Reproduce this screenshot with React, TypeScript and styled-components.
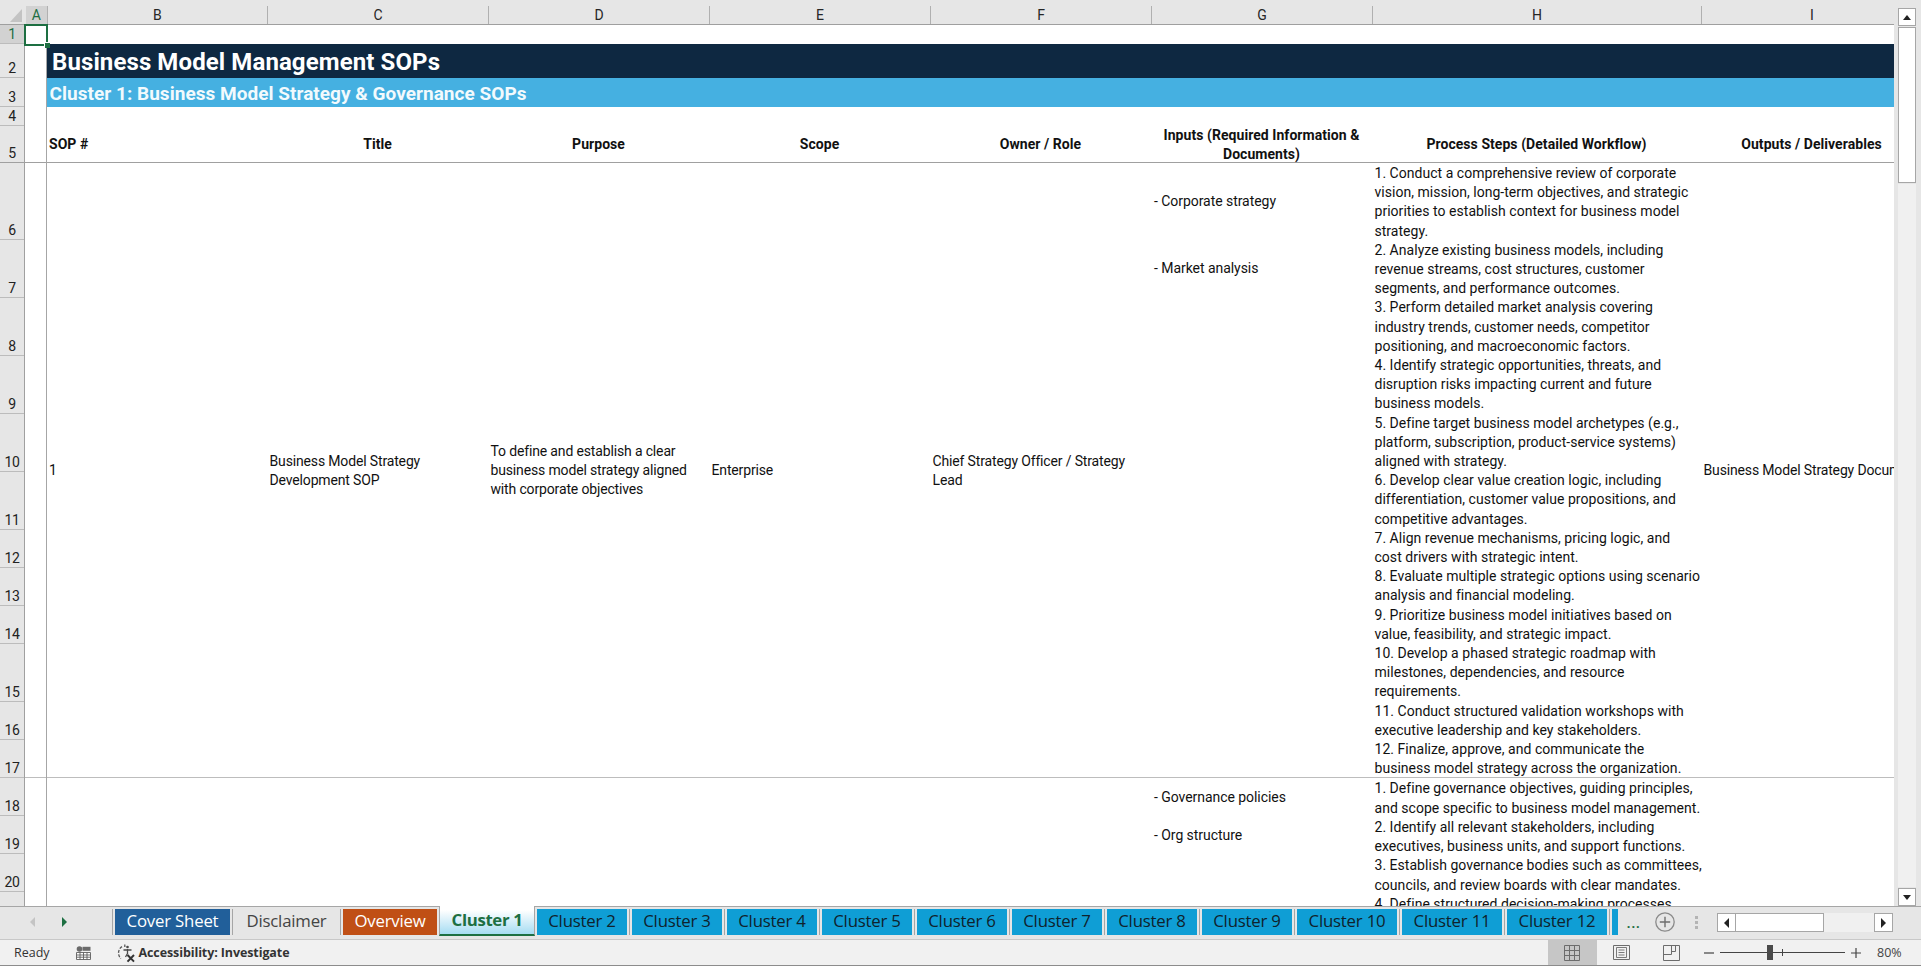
import React from 'react';
import styled, {createGlobalStyle} from 'styled-components';

const COLUMNS = [
    {name: 'A', width: 21.5},
    {name: 'B', width: 220.5},
    {name: 'C', width: 221},
    {name: 'D', width: 221},
    {name: 'E', width: 221},
    {name: 'F', width: 221},
    {name: 'G', width: 221},
    {name: 'H', width: 329},
    {name: 'I', width: 221},
];
const COL_TEMPLATE = COLUMNS.map(c => c.width + 'px').join(' ');

const ROW_HEIGHTS = [19, 34, 29, 18.7, 37.3, 77, 58, 58, 58, 58, 58, 38.5, 38, 38, 58, 38, 38, 38, 38, 38];
const toTemplate = (rows: number[]) => rows.map(h => h + 'px').join(' ');

const STEPS_ONE = `1. Conduct a comprehensive review of corporate
vision, mission, long-term objectives, and strategic
priorities to establish context for business model
strategy.
2. Analyze existing business models, including
revenue streams, cost structures, customer
segments, and performance outcomes.
3. Perform detailed market analysis covering
industry trends, customer needs, competitor
positioning, and macroeconomic factors.
4. Identify strategic opportunities, threats, and
disruption risks impacting current and future
business models.
5. Define target business model archetypes (e.g.,
platform, subscription, product-service systems)
aligned with strategy.
6. Develop clear value creation logic, including
differentiation, customer value propositions, and
competitive advantages.
7. Align revenue mechanisms, pricing logic, and
cost drivers with strategic intent.
8. Evaluate multiple strategic options using scenario
analysis and financial modeling.
9. Prioritize business model initiatives based on
value, feasibility, and strategic impact.
10. Develop a phased strategic roadmap with
milestones, dependencies, and resource
requirements.
11. Conduct structured validation workshops with
executive leadership and key stakeholders.
12. Finalize, approve, and communicate the
business model strategy across the organization.`;

const STEPS_TWO = `1. Define governance objectives, guiding principles,
and scope specific to business model management.
2. Identify all relevant stakeholders, including
executives, business units, and support functions.
3. Establish governance bodies such as committees,
councils, and review boards with clear mandates.
4. Define structured decision-making processes.`;

const TABS: {label: string; width: number; kind: 'navy' | 'plain' | 'rust' | 'active' | 'sky'}[] = [
    {label: 'Cover Sheet', width: 115, kind: 'navy'},
    {label: 'Disclaimer', width: 103, kind: 'plain'},
    {label: 'Overview', width: 94, kind: 'rust'},
    {label: 'Cluster 1', width: 96, kind: 'active'},
    ...[2, 3, 4, 5, 6, 7, 8, 9].map(n => ({label: 'Cluster ' + n, width: 90, kind: 'sky' as const})),
    ...[10, 11, 12].map(n => ({label: 'Cluster ' + n, width: 100, kind: 'sky' as const})),
];

export default function App() {
    return (
        <>
            <GlobalStyle />
            <Window>
                <TopGap />
                <Workbook>
                    <SheetArea>
                        <ColumnBar>
                            <Corner><CornerMark /></Corner>
                            <ColumnHeads>
                                {COLUMNS.map((col, i) => (
                                    <ColumnHead key={col.name} $selected={i === 0}>{col.name}</ColumnHead>
                                ))}
                            </ColumnHeads>
                        </ColumnBar>
                        <SheetBody>
                            <RowHeads>
                                {ROW_HEIGHTS.map((h, i) => (
                                    <RowHead key={i} $height={h} $selected={i === 0} $strong={i === 4}>{i + 1}</RowHead>
                                ))}
                            </RowHeads>
                            <Sheet>
                                <ColumnALine />
                                <BlankRow $height={19} />
                                <TitleBanner>Business Model Management SOPs</TitleBanner>
                                <ClusterBanner>Cluster 1: Business Model Strategy &amp; Governance SOPs</ClusterBanner>
                                <BlankRow $height={18.7} />
                                <HeaderRow>
                                    <HeaderCell $column={2} $left>SOP #</HeaderCell>
                                    <HeaderCell $column={3}>Title</HeaderCell>
                                    <HeaderCell $column={4}>Purpose</HeaderCell>
                                    <HeaderCell $column={5}>Scope</HeaderCell>
                                    <HeaderCell $column={6}>Owner / Role</HeaderCell>
                                    <HeaderCell $column={7}>{'Inputs (Required Information &\nDocuments)'}</HeaderCell>
                                    <HeaderCell $column={8}>Process Steps (Detailed Workflow)</HeaderCell>
                                    <HeaderCell $column={9}>Outputs / Deliverables</HeaderCell>
                                </HeaderRow>
                                <Record $rows={toTemplate(ROW_HEIGHTS.slice(5, 17))} $ruled>
                                    <MergedCell $column={2}>1</MergedCell>
                                    <MergedCell $column={3}>{'Business Model Strategy\nDevelopment SOP'}</MergedCell>
                                    <MergedCell $column={4}>{'To define and establish a clear\nbusiness model strategy aligned\nwith corporate objectives'}</MergedCell>
                                    <MergedCell $column={5}>Enterprise</MergedCell>
                                    <MergedCell $column={6}>{'Chief Strategy Officer / Strategy\nLead'}</MergedCell>
                                    <InputCell $row={1}>- Corporate strategy</InputCell>
                                    <InputCell $row={2}>- Market analysis</InputCell>
                                    <StepsCell>{STEPS_ONE}</StepsCell>
                                    <MergedCell $column={9}>Business Model Strategy Document</MergedCell>
                                </Record>
                                <Record $rows={toTemplate([38, 38, 38, 60])}>
                                    <InputCell $row={1}>- Governance policies</InputCell>
                                    <InputCell $row={2}>- Org structure</InputCell>
                                    <StepsCell>{STEPS_TWO}</StepsCell>
                                </Record>
                            </Sheet>
                        </SheetBody>
                        <SelectedCell><FillHandle /></SelectedCell>
                    </SheetArea>
                    <VerticalBar>
                        <ScrollButton><ArrowUp /></ScrollButton>
                        <VerticalThumb />
                        <VerticalTrack />
                        <ScrollButton><ArrowDown /></ScrollButton>
                    </VerticalBar>
                </Workbook>
                <TabStrip>
                    <TabNav>
                        <NavArrowLeft />
                        <NavArrowRight />
                    </TabNav>
                    {TABS.map((tab, i) => {
                        const next = TABS[i + 1];
                        return (
                            <React.Fragment key={tab.label}>
                                {i === 0 && <TabDivider />}
                                <Tab $kind={tab.kind} $width={tab.width}>{tab.label}</Tab>
                                {tab.kind !== 'active' && next?.kind !== 'active' && <TabDivider />}
                            </React.Fragment>
                        );
                    })}
                    <Tab $kind="sky" $width={5.5} />
                    <MoreTabs>...</MoreTabs>
                    <AddSheet>
                        <svg width="20" height="20" viewBox="0 0 20 20">
                            <circle cx="10" cy="10" r="9.2" fill="none" stroke="#8a8a8a" strokeWidth="1.3" />
                            <path d="M10 4.8V15.2M4.8 10H15.2" stroke="#6e6e6e" strokeWidth="1.4" />
                        </svg>
                    </AddSheet>
                    <SplitDots><i /><i /><i /></SplitDots>
                    <HorizontalBar>
                        <HorizontalButton><ArrowLeft /></HorizontalButton>
                        <HorizontalThumb />
                        <HorizontalTrack />
                        <HorizontalButton><ArrowRight /></HorizontalButton>
                    </HorizontalBar>
                </TabStrip>
                <StatusBar>
                    <ReadyLabel>Ready</ReadyLabel>
                    <StatusIcon>
                        <svg width="15" height="14" viewBox="0 0 15 14">
                            <circle cx="3.5" cy="3" r="2.8" fill="#6a6a6a" />
                            <rect x="6.5" y="0.8" width="8" height="4" fill="#6a6a6a" />
                            <path d="M0.5 6.5H14.5V13.5H0.5ZM0.5 9H14.5M0.5 11.2H14.5M4 6.5V13.5M7.5 6.5V13.5M11 6.5V13.5" fill="#fff" stroke="#5f5f5f" strokeWidth="0.9" />
                        </svg>
                    </StatusIcon>
                    <AccessibilityIcon>
                        <svg width="20" height="20" viewBox="0 0 20 20">
                            <path d="M6 3.6A7.6 7.6 0 0 0 5 15.6" fill="none" stroke="#5a5a5a" strokeWidth="1.3" strokeDasharray="3 1.4" />
                            <path d="M8.8 1.5V4" stroke="#5a5a5a" strokeWidth="1.3" />
                            <circle cx="11.5" cy="4" r="1.3" fill="#4a4a4a" />
                            <path d="M7.5 7H15.5M11.5 6V11M11.5 10.5L9.5 14" fill="none" stroke="#4a4a4a" strokeWidth="1.3" />
                            <path d="M11.5 12L18 18.6M18 12L11.5 18.6" stroke="#333" strokeWidth="2" />
                        </svg>
                    </AccessibilityIcon>
                    <AccessibilityText>Accessibility: Investigate</AccessibilityText>
                    <ViewButtons>
                        <ViewButton $active>
                            <svg width="16" height="16" viewBox="0 0 16 16">
                                <path d="M0.5 0.5H15.5V15.5H0.5ZM0.5 5.5H15.5M0.5 10.5H15.5M5.5 0.5V15.5M10.5 0.5V15.5" fill="none" stroke="#6c6c6c" />
                            </svg>
                        </ViewButton>
                        <ViewButton>
                            <svg width="17" height="15" viewBox="0 0 17 15">
                                <path d="M0.5 0.5H16.5V14.5H0.5Z" fill="none" stroke="#6c6c6c" />
                                <path d="M3.5 2.5H13.5V12.5H3.5ZM5.5 5H11.5M5.5 7.5H11.5M5.5 10H11.5" fill="none" stroke="#6c6c6c" strokeWidth="0.9" />
                            </svg>
                        </ViewButton>
                        <ViewButton>
                            <svg width="17" height="16" viewBox="0 0 17 16">
                                <path d="M0.5 0.5H16.5V15.5H0.5ZM0.5 9.5H8.5V0.5M8.5 6.5H12.5V0.5" fill="none" stroke="#6c6c6c" />
                            </svg>
                        </ViewButton>
                    </ViewButtons>
                    <ZoomControl>
                        <ZoomSign>
                            <svg width="10" height="10" viewBox="0 0 10 10"><path d="M0 5H10" stroke="#444" strokeWidth="1.2" /></svg>
                        </ZoomSign>
                        <SliderTrack>
                            <SliderTick />
                            <SliderThumb />
                        </SliderTrack>
                        <ZoomSign>
                            <svg width="10" height="10" viewBox="0 0 10 10"><path d="M0 5H10M5 0V10" stroke="#444" strokeWidth="1.2" /></svg>
                        </ZoomSign>
                        <ZoomValue>80%</ZoomValue>
                    </ZoomControl>
                </StatusBar>
            </Window>
        </>
    );
}

const GlobalStyle = createGlobalStyle`
    html, body {
        margin: 0;
        padding: 0;
        height: 100%;
        overflow: hidden;
    }
    #root {
        height: 100%;
    }
    * {
        box-sizing: border-box;
    }
`

const Window = styled.div`
    width: 100%;
    height: 966px;
    display: flex;
    flex-direction: column;
    background-color: #e6e6e6;
    font-family: Roboto, "Liberation Sans", sans-serif;
    color: #111;
    overflow: hidden;
`
const TopGap = styled.div`
    height: 6px;
    flex: none;
`
const Workbook = styled.div`
    height: 900px;
    flex: none;
    display: flex;
`
const SheetArea = styled.div`
    position: relative;
    width: 1893.5px;
    flex: none;
    display: flex;
    flex-direction: column;
`
const ColumnBar = styled.div`
    height: 19px;
    flex: none;
    display: flex;
    border-bottom: 1px solid #9f9f9f;
`
const Corner = styled.div`
    width: 26px;
    flex: none;
    position: relative;
`
const CornerMark = styled.div`
    position: absolute;
    left: 10px;
    bottom: 2px;
    width: 12px;
    height: 13px;
    background-color: #c3c3c3;
    clip-path: polygon(100% 0, 100% 100%, 0 100%);
`
const ColumnHeads = styled.div`
    flex: 1;
    display: grid;
    grid-template-columns: ${COL_TEMPLATE};
    overflow: hidden;
`
const ColumnHead = styled.div<{$selected?: boolean}>`
    display: flex;
    align-items: center;
    justify-content: center;
    font-size: 14px;
    color: ${props => props.$selected ? '#1c6e42' : '#262626'};
    background-color: ${props => props.$selected ? '#d2d2d2' : 'transparent'};
    border-right: 1px solid #b0b0b0;
`
const SheetBody = styled.div`
    flex: 1;
    min-height: 0;
    display: flex;
    overflow: hidden;
`
const RowHeads = styled.div`
    width: 25px;
    flex: none;
    display: flex;
    flex-direction: column;
    border-right: 1px solid #a0a0a0;
`
const RowHead = styled.div<{$height: number; $selected?: boolean; $strong?: boolean}>`
    height: ${props => props.$height}px;
    flex: none;
    display: flex;
    align-items: flex-end;
    justify-content: center;
    padding-bottom: 2px;
    font-size: 14px;
    line-height: 14px;
    letter-spacing: -0.3px;
    color: ${props => props.$selected ? '#1c6e42' : '#222'};
    background-color: ${props => props.$selected ? '#d2d2d2' : 'transparent'};
    border-bottom: 1px solid ${props => props.$strong ? '#a0a0a0' : '#bcbcbc'};
`
const Sheet = styled.div`
    flex: 1;
    min-width: 0;
    position: relative;
    display: flex;
    flex-direction: column;
    background-color: #fff;
    overflow: hidden;
`
const ColumnALine = styled.div`
    position: absolute;
    left: 20.5px;
    top: 0;
    bottom: 0;
    width: 1px;
    background-color: #a6a6a6;
`
const SelectedCell = styled.div`
    position: absolute;
    left: 24px;
    top: 18px;
    width: 24px;
    height: 22px;
    border: 2px solid #1d6f42;
`
const FillHandle = styled.div`
    position: absolute;
    right: -4px;
    bottom: -4px;
    width: 6px;
    height: 6px;
    background-color: #1d6f42;
    border: 1px solid #fff;
    border-width: 1px 0 0 1px;
`
const BlankRow = styled.div<{$height: number}>`
    height: ${props => props.$height}px;
    flex: none;
`
const TitleBanner = styled.div`
    height: 34px;
    flex: none;
    margin-left: 21.5px;
    padding: 2px 0 0 5.5px;
    display: flex;
    align-items: center;
    background-color: #0e2841;
    color: #fff;
    font-size: 24px;
    font-weight: 700;
    letter-spacing: 0.1px;
`
const ClusterBanner = styled.div`
    height: 29px;
    flex: none;
    margin-left: 21.5px;
    padding: 2px 0 0 3px;
    display: flex;
    align-items: center;
    background-color: #45b0e1;
    color: #f2fafd;
    font-size: 19px;
    font-weight: 700;
    letter-spacing: 0.03px;
`
const HeaderRow = styled.div`
    height: 37.3px;
    flex: none;
    display: grid;
    grid-template-columns: ${COL_TEMPLATE};
    border-bottom: 1px solid #a0a0a0;
`
const HeaderCell = styled.div<{$column: number; $left?: boolean}>`
    grid-column: ${props => props.$column};
    align-self: center;
    padding: 0 2.5px;
    font-size: 14px;
    font-weight: 700;
    line-height: 19px;
    letter-spacing: 0.05px;
    white-space: pre;
    text-align: ${props => props.$left ? 'left' : 'center'};
    color: #111;
`
const Record = styled.div<{$rows: string; $ruled?: boolean}>`
    flex: none;
    display: grid;
    grid-template-columns: ${COL_TEMPLATE};
    grid-template-rows: ${props => props.$rows};
    box-shadow: ${props => props.$ruled ? 'inset 0 -1px 0 #bdbdbd' : 'none'};
`
const BodyText = styled.div`
    padding: 0 2.5px;
    font-size: 14px;
    line-height: 19.2px;
    letter-spacing: 0.03px;
    white-space: pre;
`
const MergedCell = styled(BodyText)<{$column: number}>`
    grid-column: ${props => props.$column};
    grid-row: 1 / -1;
    align-self: center;
    letter-spacing: -0.15px;
`
const InputCell = styled(BodyText)<{$row: number}>`
    grid-column: 7;
    grid-row: ${props => props.$row};
    align-self: center;
    padding-left: 3px;
    letter-spacing: -0.05px;
`
const StepsCell = styled(BodyText)`
    grid-column: 8;
    grid-row: 1 / -1;
    align-self: start;
    padding-top: 1px;
`
const VerticalBar = styled.div`
    flex: 1;
    padding: 2px 5px 0 4px;
    display: flex;
    flex-direction: column;
    gap: 1px;
`
const ScrollButton = styled.div`
    height: 18px;
    flex: none;
    display: flex;
    align-items: center;
    justify-content: center;
    background-color: #fff;
    border: 1px solid #a6a6a6;
`
const VerticalThumb = styled.div`
    height: 156px;
    flex: none;
    background-color: #fff;
    border: 1px solid #a6a6a6;
`
const VerticalTrack = styled.div`
    flex: 1;
    background-color: #f0f0f0;
`
const ArrowUp = styled.div`
    border-left: 4.5px solid transparent;
    border-right: 4.5px solid transparent;
    border-bottom: 5px solid #222;
`
const ArrowDown = styled.div`
    border-left: 4.5px solid transparent;
    border-right: 4.5px solid transparent;
    border-top: 5px solid #222;
`
const ArrowLeft = styled.div`
    border-top: 5.5px solid transparent;
    border-bottom: 5.5px solid transparent;
    border-right: 5px solid #222;
`
const ArrowRight = styled.div`
    border-top: 5.5px solid transparent;
    border-bottom: 5.5px solid transparent;
    border-left: 5px solid #222;
`
const TabStrip = styled.div`
    height: 33px;
    flex: none;
    display: flex;
    align-items: flex-start;
    gap: 2px;
    padding-top: 2px;
    border-top: 1px solid #a6a6a6;
`
const TabNav = styled.div`
    width: 110px;
    height: 26px;
    flex: none;
    display: flex;
    align-items: center;
    padding-left: 30px;
    gap: 27px;
`
const NavArrowLeft = styled.div`
    border-top: 5px solid transparent;
    border-bottom: 5px solid transparent;
    border-right: 5px solid #c4c4c4;
`
const NavArrowRight = styled.div`
    border-top: 5px solid transparent;
    border-bottom: 5px solid transparent;
    border-left: 5px solid #1d6f42;
`
const TabDivider = styled.div`
    width: 1px;
    height: 26px;
    flex: none;
    background-color: #a6a6a6;
`
const TAB_KINDS = {
    navy: 'background-color: #215f9a; color: #fff;',
    plain: 'color: #444;',
    rust: 'background-color: #c04f15; color: #fff;',
    sky: 'background-color: #0f9ed5; color: #10222c;',
    active: `
        height: 30px;
        margin-top: -3px;
        padding-bottom: 1px;
        background: linear-gradient(#fff 15%, #a6dcf2);
        color: #1d6f42;
        font-weight: 700;
        letter-spacing: -0.35px;
        border: 1px solid #a6a6a6;
        border-top: none;
        border-bottom: 2px solid #1d6f42;
    `,
};
const Tab = styled.div<{$kind: keyof typeof TAB_KINDS; $width: number}>`
    width: ${props => props.$width}px;
    height: 26px;
    flex: none;
    display: flex;
    align-items: center;
    justify-content: center;
    padding-bottom: 4px;
    font-family: "Open Sans", sans-serif;
    font-size: 16.8px;
    letter-spacing: -0.2px;
    white-space: nowrap;
    ${props => TAB_KINDS[props.$kind]}
`
const MoreTabs = styled.div`
    width: 28px;
    height: 26px;
    flex: none;
    display: flex;
    align-items: center;
    justify-content: center;
    color: #1d6f42;
    font-family: "Open Sans", sans-serif;
    font-size: 15px;
    font-weight: 600;
    letter-spacing: 0.5px;
`
const AddSheet = styled.div`
    width: 20px;
    height: 26px;
    margin-left: 5px;
    flex: none;
    display: flex;
    align-items: center;
`
const SplitDots = styled.div`
    margin-left: 18px;
    height: 26px;
    flex: none;
    display: flex;
    flex-direction: column;
    justify-content: center;
    gap: 2px;
    i {
        display: block;
        width: 3px;
        height: 3px;
        background-color: #b4b4b4;
    }
`
const HorizontalBar = styled.div`
    margin: 4px 28.5px 0 auto;
    width: 176px;
    height: 19px;
    flex: none;
    display: flex;
    background-color: #f0f0f0;
`
const HorizontalButton = styled.div`
    width: 19px;
    flex: none;
    display: flex;
    align-items: center;
    justify-content: center;
    background-color: #fff;
    border: 1px solid #a6a6a6;
`
const HorizontalThumb = styled.div`
    width: 88px;
    flex: none;
    background-color: #fff;
    border: 1px solid #a6a6a6;
    border-left: none;
`
const HorizontalTrack = styled.div`
    flex: 1;
`
const StatusBar = styled.div`
    flex: 1;
    display: flex;
    align-items: center;
    padding-left: 14px;
    background-color: #f1f1f1;
    border-top: 1px solid #c8c8c8;
    border-bottom: 1px solid #8c8c8c;
    font-family: "Open Sans", sans-serif;
    font-size: 12.5px;
    color: #333;
`
const ReadyLabel = styled.div`
    width: 61.5px;
    flex: none;
    margin-top: -1px;
`
const StatusIcon = styled.div`
    width: 40px;
    flex: none;
    display: flex;
`
const AccessibilityIcon = styled.div`
    width: 23px;
    flex: none;
    display: flex;
`
const AccessibilityText = styled.div`
    font-weight: 700;
    letter-spacing: -0.1px;
    white-space: nowrap;
`
const ViewButtons = styled.div`
    margin-left: auto;
    align-self: stretch;
    display: flex;
`
const ViewButton = styled.div<{$active?: boolean}>`
    width: 49.5px;
    display: flex;
    align-items: center;
    justify-content: center;
    background-color: ${props => props.$active ? '#c6c6c6' : 'transparent'};
`
const ZoomControl = styled.div`
    margin-left: 8px;
    display: flex;
    align-items: center;
    gap: 6px;
    padding-right: 14px;
`
const ZoomSign = styled.div`
    width: 10px;
    display: flex;
`
const SliderTrack = styled.div`
    position: relative;
    width: 125px;
    height: 1px;
    background-color: #444;
`
const SliderThumb = styled.div`
    position: absolute;
    left: 47px;
    top: -7px;
    width: 6px;
    height: 15px;
    background-color: #4a4a4a;
`
const SliderTick = styled.div`
    position: absolute;
    left: 62px;
    top: -3px;
    width: 1px;
    height: 7px;
    background-color: #444;
`
const ZoomValue = styled.div`
    margin-left: 10px;
    width: 30px;
    color: #444;
    white-space: nowrap;
`
